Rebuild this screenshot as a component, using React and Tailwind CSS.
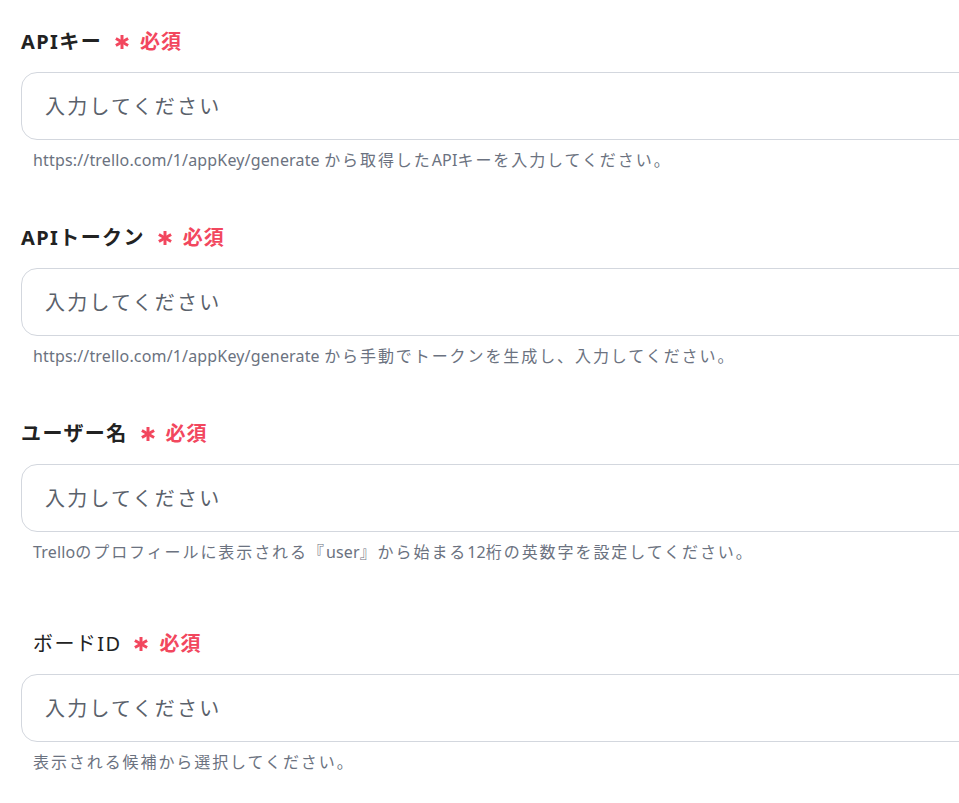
import React from "react";

// helper texts are split so Latin runs keep normal spacing
const fields = [
  {
    label: "APIキー",
    bold: true,
    help: [
      ["https://trello.com/1/appKey/generate ", true],
      ["から取得した", false],
      ["API", true],
      ["キーを入力してください。", false],
    ],
  },
  {
    label: "APIトークン",
    bold: true,
    help: [
      ["https://trello.com/1/appKey/generate ", true],
      ["から手動でトークンを生成し、入力してください。", false],
    ],
  },
  {
    label: "ユーザー名",
    bold: true,
    help: [
      ["Trello", true],
      ["のプロフィールに表示される『", false],
      ["user", true],
      ["』から始まる", false],
      ["12", true],
      ["桁の英数字を設定してください。", false],
    ],
  },
  {
    label: "ボードID",
    bold: false,
    help: [["表示される候補から選択してください。", false]],
  },
];

const Asterisk = () => (
  <svg width="16" height="16" viewBox="0 0 16 16" className="shrink-0">
    <g stroke="#f2475e" strokeWidth="3" strokeLinecap="butt">
      <line x1="8" y1="1" x2="8" y2="15" />
      <line x1="1.9" y1="4.5" x2="14.1" y2="11.5" />
      <line x1="1.9" y1="11.5" x2="14.1" y2="4.5" />
    </g>
  </svg>
);

const Field = ({ label, bold, help }) => (
  <div className="flex flex-col">
    <div className={`flex items-center h-[28px] ${bold ? "" : "pl-[12px]"}`}>
      <span
        className={`text-[20px] tracking-[0.07em] text-[#222222] ${bold ? "font-bold" : "font-normal"}`}
      >
        {label}
      </span>
      <span className="ml-[12px] flex items-center text-[#f2475e] font-bold">
        <Asterisk />
        <span className="ml-[10px] text-[20px] tracking-[0.05em]">必須</span>
      </span>
    </div>
    <input
      type="text"
      placeholder="入力してください"
      className="mt-[16px] h-[68px] w-[1000px] rounded-[16px] border border-[#d3d7de] bg-white px-[23px] text-[20px] tracking-[0.11em] text-[#374151] placeholder:text-[#5a616b] outline-none"
    />
    <p className="mt-[10px] pl-[12px] h-[20px] leading-[20px] text-[16px] text-[#6b7280] whitespace-nowrap">
      {help.map(([text, latin], i) => (
        <span
          key={i}
          className={latin ? "tracking-[0.01em]" : "tracking-[0.12em]"}
        >
          {text}
        </span>
      ))}
    </p>
  </div>
);

const App = () => {
  return (
    <div
      className="w-full min-h-screen overflow-hidden bg-white pl-[21px] pt-[28px]"
      style={{ fontFamily: '"Noto Sans", "Noto Sans CJK JP", sans-serif' }}
    >
      <div className="flex flex-col gap-[54px]">
        <Field {...fields[0]} />
        <Field {...fields[1]} />
        <Field {...fields[2]} />
        <div className="mt-[14px]">
          <Field {...fields[3]} />
        </div>
      </div>
    </div>
  );
};

export default App;
